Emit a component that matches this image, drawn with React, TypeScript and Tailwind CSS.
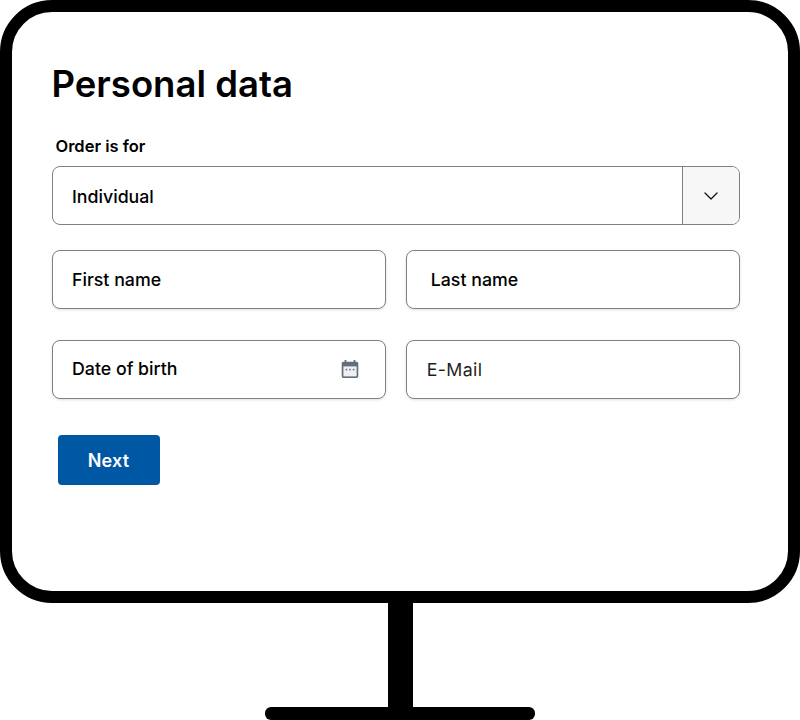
import { ChevronDown } from 'lucide-react';

function Field({ label, className = '' }: { label: string; className?: string }) {
  return (
    <div className={`flex h-[59px] items-center rounded-[8px] border border-[#808080] bg-white pt-[2px] shadow-[0_1px_3px_rgba(0,0,0,0.12)] ${className}`}>
      <span className="text-[17.75px] font-medium text-black">{label}</span>
    </div>
  );
}

function CalendarIcon() {
  return (
    <svg width="20" height="20" viewBox="0 0 20 20" className="-mt-[1px] shrink-0">
      <path
        fill="#646d7b"
        d="M4.6 1h1.8v1.8h7.2V1h1.8v1.8h1.2c1 0 1.7.7 1.7 1.7v12.8c0 1-.7 1.7-1.7 1.7H3.4c-1 0-1.7-.7-1.7-1.7V4.5c0-1 .7-1.7 1.7-1.7h1.2V1z"
      />
      <rect x="3.4" y="7.4" width="13.2" height="10" fill="#eef0f2" />
      <rect x="5.6" y="9.8" width="1.6" height="1.6" fill="#646d7b" />
      <rect x="9.2" y="9.8" width="1.6" height="1.6" fill="#646d7b" />
      <rect x="12.8" y="9.8" width="1.6" height="1.6" fill="#646d7b" />
    </svg>
  );
}

export default function App() {
  return (
    <div className="flex h-[720px] w-[800px] flex-col bg-white font-['Inter',sans-serif]">
      <div className="h-[603px] shrink-0 rounded-[52px] border-[12.5px] border-black bg-white pt-[51px] pr-[48px] pl-[39.5px]">
        <h1 className="h-[42px] text-[36.5px] leading-[42px] font-semibold text-black">
          Personal data
        </h1>
        <div className="mt-[31px] pl-[4px] text-[16.5px] leading-[20px] font-semibold text-black">Order is for</div>

        <div className="mt-[10px] flex h-[59px] overflow-hidden rounded-[8px] border border-[#808080]">
          <div className="flex flex-1 items-center pt-[3px] pl-[19.5px] text-[17.75px] font-medium text-black">Individual</div>
          <div className="flex w-[57px] items-center justify-center border-l border-[#808080] bg-[#f7f7f7]">
            <ChevronDown size={24} strokeWidth={1.25} className="text-[#111111]" />
          </div>
        </div>

        <div className="mt-[25px] grid grid-cols-2 gap-x-[20px]">
          <Field label="First name" className="pl-[19.5px]" />
          <Field label="Last name" className="pl-[24px]" />
        </div>

        <div className="mt-[31px] grid grid-cols-2 gap-x-[20px]">
          <div className="flex h-[59px] items-center justify-between rounded-[8px] border border-[#808080] bg-white pr-[25px] pl-[19.5px] shadow-[0_1px_3px_rgba(0,0,0,0.12)]">
            <span className="text-[17.75px] font-medium text-black">Date of birth</span>
            <CalendarIcon />
          </div>
          <div className="flex h-[59px] items-center rounded-[8px] border border-[#808080] bg-white pt-[1px] pl-[20px] shadow-[0_1px_3px_rgba(0,0,0,0.12)]">
            <span className="text-[17.75px] tracking-[0.02em] text-[#1f1f1f]">E-Mail</span>
          </div>
        </div>

        <button
          type="button"
          className="mt-[36px] ml-[6px] flex h-[50px] w-[102px] items-center justify-center rounded-[4px] bg-[#0057a4] text-[18px] font-semibold tracking-[0.01em] text-white"
        >
          Next
        </button>
      </div>

      <div className="mx-auto h-[104px] w-[25px] shrink-0 bg-black" />
      <div className="mx-auto h-[13px] w-[270px] shrink-0 rounded-[6px] bg-black" />
    </div>
  );
}
